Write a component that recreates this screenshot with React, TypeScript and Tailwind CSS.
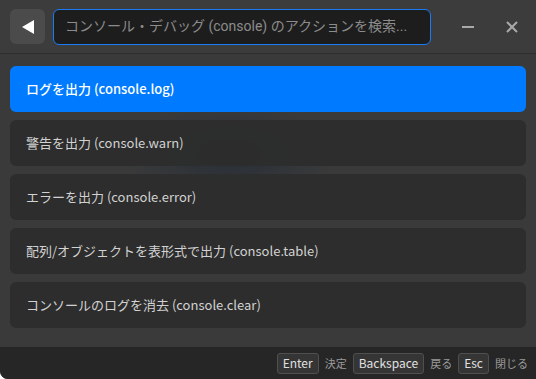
import React, { useState } from 'react';

type Action = { id: string; label: string };

const actions: Action[] = [
  { id: 'log', label: 'ログを出力 (console.log)' },
  { id: 'warn', label: '警告を出力 (console.warn)' },
  { id: 'error', label: 'エラーを出力 (console.error)' },
  { id: 'table', label: '配列/オブジェクトを表形式で出力 (console.table)' },
  { id: 'clear', label: 'コンソールのログを消去 (console.clear)' },
];

const Key: React.FC<{ children: React.ReactNode }> = ({ children }) => (
  <span className="h-[21px] px-[5px] flex items-center rounded-[3px] border border-[#4f4f4f] bg-[#353535] text-[12px] text-[#e0e0e0]">
    {children}
  </span>
);

export default function App() {
  const [selected, setSelected] = useState('log');
  const [query, setQuery] = useState('');

  return (
    <div
      className="w-[536px] h-[379px] flex flex-col overflow-hidden bg-[#3a3a3a] rounded-bl-[8px] text-white"
      style={{ fontFamily: '"Noto Sans CJK JP", "Noto Sans", sans-serif' }}
    >
      {/* Header */}
      <div className="h-[54px] shrink-0 flex items-center pl-[10px] gap-[8px] border-b border-[#2e2e2e] bg-[#3c3c3c]">
        <button className="w-[35px] h-[35px] rounded-[6px] bg-[#4b4b4b] flex items-center justify-center">
          <svg width="14" height="16" viewBox="0 0 14 16">
            <polygon points="13,1 13,15 1,8" fill="#ffffff" />
          </svg>
        </button>
        <div className="w-[378px] h-[36px] rounded-[6px] border border-[#1a7cf5] bg-[#1d1d1d] flex items-center px-[11px]">
          <input
            value={query}
            onChange={e => setQuery(e.target.value)}
            placeholder="コンソール・デバッグ (console) のアクションを検索..."
            className="w-full bg-transparent outline-none text-[14px] text-white placeholder:text-[#8c8c8c] caret-white"
            style={{ fontFamily: 'Roboto, "Noto Sans CJK JP", sans-serif' }}
          />
        </div>
        <div className="flex items-center gap-[30px] pl-[22px]">
          <svg width="14" height="14" viewBox="0 0 14 14">
            <line x1="1" y1="7" x2="13" y2="7" stroke="#a9a9a9" strokeWidth="2" />
          </svg>
          <svg width="14" height="14" viewBox="0 0 14 14">
            <path d="M2 2 L12 12 M12 2 L2 12" stroke="#a9a9a9" strokeWidth="2" />
          </svg>
        </div>
      </div>

      {/* Action list */}
      <div className="flex-1 flex flex-col gap-[8px] px-[10px] pt-[12px] bg-[radial-gradient(ellipse_110px_50px_at_230px_100px,rgba(24,36,54,0.55),transparent)]">
        {actions.map(a => (
          <div
            key={a.id}
            onClick={() => setSelected(a.id)}
            className={`h-[46px] shrink-0 rounded-[6px] flex items-center px-[16px] text-[13px] cursor-pointer ${
              selected === a.id
                ? 'bg-[#007bff] text-white font-medium'
                : 'bg-[#2c2c2c]/90 text-[#d2d2d2]'
            }`}
          >
            {a.label}
          </div>
        ))}
      </div>

      {/* Footer */}
      <div className="h-[32px] shrink-0 flex items-center justify-end gap-[6px] pr-[8px] bg-[#262626] text-[11px] text-[#9a9a9a]">
        <Key>Enter</Key>
        <span>決定</span>
        <Key>Backspace</Key>
        <span>戻る</span>
        <Key>Esc</Key>
        <span>閉じる</span>
      </div>
    </div>
  );
}
